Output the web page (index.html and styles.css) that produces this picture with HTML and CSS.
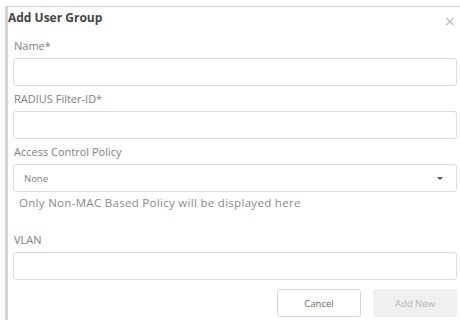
FILE: index.html
```html
<!DOCTYPE html>
<html lang="en">
<head>
    <meta charset="UTF-8">
    <meta name="viewport" content="width=device-width, initial-scale=1.0">
    <title>Add User Group</title>
    <link rel="stylesheet" href="styles.css">
</head>
<body>
    <div class="dialog">
        <div class="dialog-header">
            <h1>Add User Group</h1>
            <span class="close">&times;</span>
        </div>

        <form class="dialog-body">
            <div class="field">
                <label for="name">Name*</label>
                <input type="text" id="name">
            </div>
            <div class="field">
                <label for="filterId">RADIUS Filter-ID*</label>
                <input type="text" id="filterId">
            </div>
            <div class="field">
                <label>Access Control Policy</label>
                <div class="select">
                    <span>None</span>
                    <span class="caret"></span>
                </div>
                <p class="hint">Only Non-MAC Based Policy will be displayed here</p>
            </div>
            <div class="field vlan">
                <label for="vlan">VLAN</label>
                <input type="text" id="vlan">
            </div>

            <div class="button-row">
                <button type="button" class="btn">Cancel</button>
                <button type="button" class="btn disabled">Add New</button>
            </div>
        </form>
    </div>
</body>
</html>
```

FILE: styles.css
```css
body {
    margin: 0;
    padding: 6px 0 0 5px;
    font-family: 'Open Sans', 'Liberation Sans', sans-serif;
    background: #fff;
    color: #666;
}
.dialog {
    border-top: 1px solid #cfcfcf;
    border-left: 3px solid #d2d2d2;
    height: 314px;
    box-sizing: border-box;
}
.dialog-header {
    display: flex;
    justify-content: space-between;
    align-items: flex-start;
    height: 32px;
}
h1 {
    margin: 0;
    padding-top: 2px;
    font-size: 12px;
    line-height: 18px;
    font-weight: 700;
    color: #444;
}
.close {
    margin: 5px 5px 0 0;
    font-size: 18px;
    line-height: 18px;
    color: #bbb;
}
.dialog-body {
    padding: 0 3px 0 5px;
}
.field {
    margin-bottom: 6px;
}
label {
    display: block;
    font-size: 11px;
    line-height: 14px;
    color: #808080;
    margin: 0 0 5px 1px;
}
input, .select {
    display: block;
    width: 100%;
    height: 28px;
    box-sizing: border-box;
    border: 1px solid #dcdcdc;
    border-radius: 3px;
    background: #fff;
    font-family: inherit;
}
.select {
    display: flex;
    align-items: center;
    justify-content: space-between;
    padding: 0 13px 0 10px;
    font-size: 9.5px;
    color: #808080;
}
.caret {
    width: 0;
    height: 0;
    border-left: 3px solid transparent;
    border-right: 3px solid transparent;
    border-top: 3px solid #555;
}
.hint {
    margin: 4px 0 0 6px;
    font-size: 11.5px;
    line-height: 14px;
    letter-spacing: 0.3px;
    color: #8a8a8a;
}
.field.vlan {
    margin-top: 23px;
}
.button-row {
    display: flex;
    justify-content: flex-end;
    gap: 12px;
    margin-top: 9px;
}
.btn {
    width: 84px;
    height: 28px;
    border: 1px solid #d6d6d6;
    border-radius: 3px;
    background: #fff;
    font-family: inherit;
    font-size: 9.5px;
    color: #666;
}
.btn.disabled {
    border-color: #f0f0f0;
    background: #f0f0f0;
    color: #b5b5b5;
}
```
